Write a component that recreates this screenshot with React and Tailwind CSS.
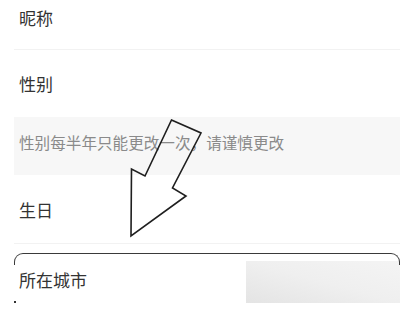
export default function App() {
  const font = { fontFamily: '"Noto Sans CJK SC", "Noto Sans", sans-serif' };
  return (
    <div className="relative w-[400px] h-[310px] overflow-hidden bg-white text-[#333]" style={font}>
      <div className="h-[49px] pl-[19px] pt-[5px] text-[17px] leading-[25px]">昵称</div>
      <div className="ml-[14px] h-px bg-[#f2f2f2]" />
      <div className="h-[67px] flex items-center pl-[19px] text-[17px] leading-[25px]">性别</div>
      <div className="ml-[14px] h-[58px] bg-[#f7f7f7] flex items-center pl-[5px] pb-[6px] text-[15.6px] text-[#8a8a8a]">
        性别每半年只能更改一次，请谨慎更改
      </div>
      <div className="h-[68px] flex items-center pl-[19px] text-[17px] leading-[25px]">生日</div>
      <div className="ml-[14px] h-px bg-[#f2f2f2]" />
      <div className="flex items-start justify-between h-[66px]">
        <div className="pl-[19px] pt-[23px] text-[17px] leading-[25px]">所在城市</div>
        <div className="mt-[17px] w-[154px] h-[42px] bg-gradient-to-tr from-[#e4e4e4] via-[#efefef] to-[#f4f4f4]" />
      </div>

      {/* annotation frame */}
      <div className="absolute left-[14px] right-0 top-[253px] h-[12px] border-t-[1.5px] border-x-[1.5px] border-[#3a3a3a] rounded-t-[9px]" />
      <span className="absolute left-[14px] top-[301px] w-[2px] h-[2px] bg-[#333]" />

      {/* arrow */}
      <svg className="absolute inset-0" width="400" height="310" viewBox="0 0 400 310">
        <polygon
          points="171.5,120 201,133 172.5,188 186,196 131,236 131.5,169 145,176"
          fill="none"
          stroke="#1f1f1f"
          strokeWidth="1.6"
          strokeLinejoin="miter"
        />
      </svg>
    </div>
  );
}
